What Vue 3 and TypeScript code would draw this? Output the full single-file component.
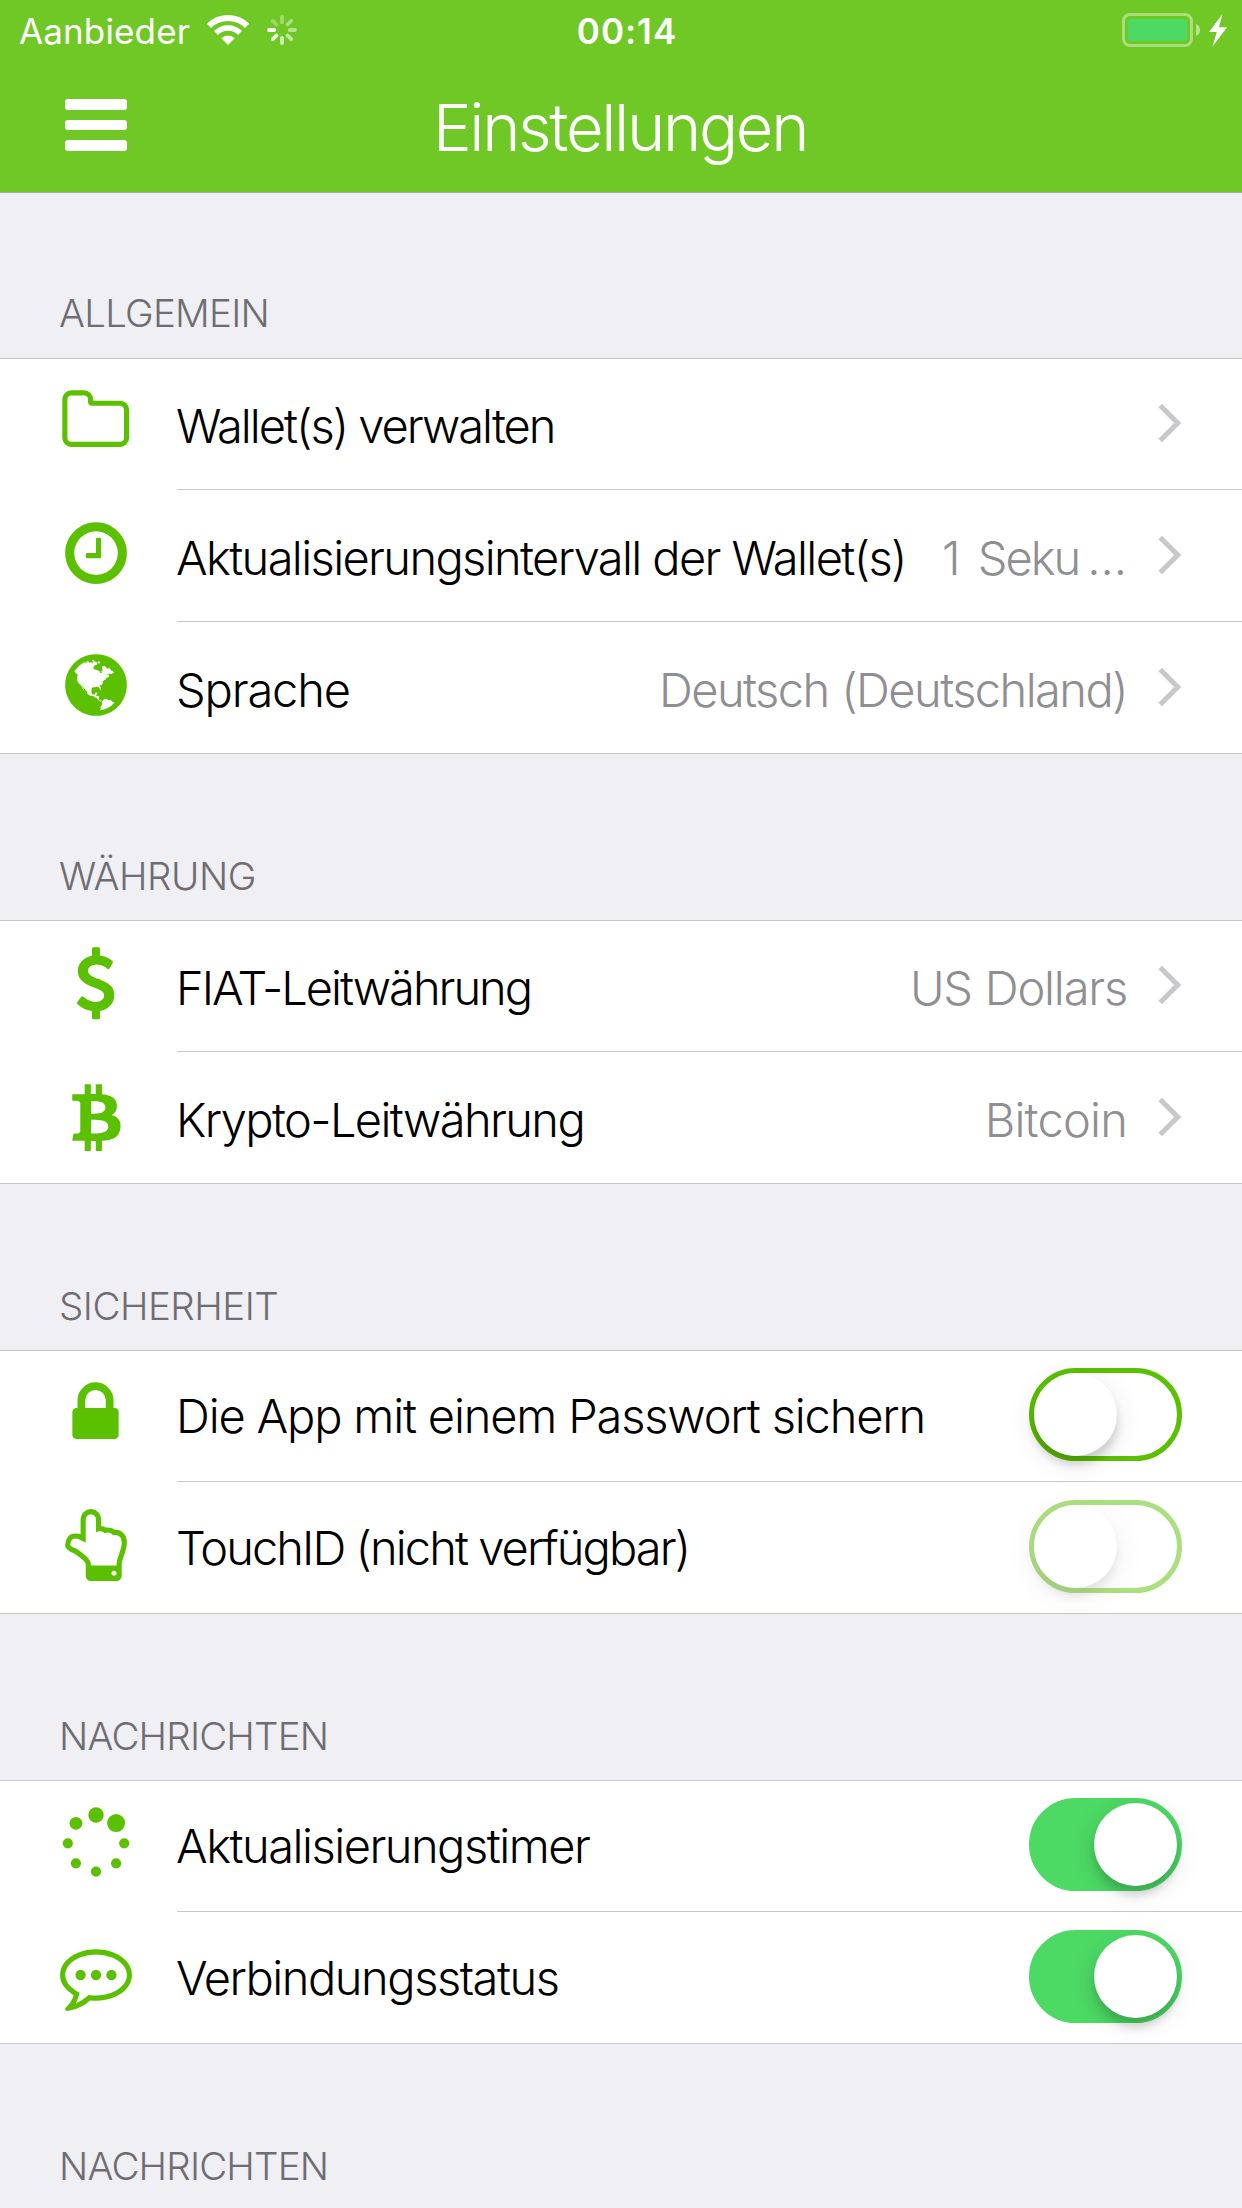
<script setup lang="ts">
type IconName = 'folder' | 'clock' | 'globe' | 'dollar' | 'bitcoin' | 'lock' | 'hand' | 'spinner' | 'comment'

interface Row {
  icon: IconName
  label: string
  tracking: number
  value?: string
  valueTracking?: number
  truncated?: boolean
  toggle?: 'on' | 'off' | 'disabled'
}

interface Section {
  title: string
  tracking: number
  rows: Row[]
}

const sections: Section[] = [
  {
    title: 'ALLGEMEIN',
    tracking: -0.75,
    rows: [
      { icon: 'folder', label: 'Wallet(s) verwalten', tracking: -2, value: '' },
      { icon: 'clock', label: 'Aktualisierungsintervall der Wallet(s)', tracking: -1.63, value: '1 Seku', valueTracking: -2, truncated: true },
      { icon: 'globe', label: 'Sprache', tracking: -1.15, value: 'Deutsch (Deutschland)', valueTracking: -1.56 },
    ],
  },
  {
    title: 'WÄHRUNG',
    tracking: -0.45,
    rows: [
      { icon: 'dollar', label: 'FIAT-Leitwährung', tracking: -2.02, value: 'US Dollars', valueTracking: -1.2 },
      { icon: 'bitcoin', label: 'Krypto-Leitwährung', tracking: -1.62, value: 'Bitcoin', valueTracking: -0.8 },
    ],
  },
  {
    title: 'SICHERHEIT',
    tracking: -0.5,
    rows: [
      { icon: 'lock', label: 'Die App mit einem Passwort sichern', tracking: -1.17, toggle: 'off' },
      { icon: 'hand', label: 'TouchID (nicht verfügbar)', tracking: -1.93, toggle: 'disabled' },
    ],
  },
  {
    title: 'NACHRICHTEN',
    tracking: -0.82,
    rows: [
      { icon: 'spinner', label: 'Aktualisierungstimer', tracking: -1.5, toggle: 'on' },
      { icon: 'comment', label: 'Verbindungsstatus', tracking: -1.46, toggle: 'on' },
    ],
  },
  { title: 'NACHRICHTEN', tracking: -0.82, rows: [] },
]

// Glyphs are drawn on a 1792-unit grid; x and y place the grid inside the row.
const glyphs: Partial<Record<IconName, { x: number; y: number; d: string }>> = {
  folder: {
    x: 19.7,
    y: 26.2,
    d: 'M1600 1312v-704q0-40-28-68t-68-28h-704q-40 0-68-28t-28-68v-64q0-40-28-68t-68-28h-320q-40 0-68 28t-28 68v960q0 40 28 68t68 28h1216q40 0 68-28t28-68zm128-704v704q0 92-66 158t-158 66h-1216q-92 0-158-66t-66-158v-960q0-92 66-158t158-66h320q92 0 158 66t66 158v32h672q92 0 158 66t66 158z',
  },
  clock: {
    x: 20,
    y: 27.1,
    d: 'M1024 544v448q0 14-9 23t-23 9h-320q-14 0-23-9t-9-23v-64q0-14 9-23t23-9h224v-352q0-14 9-23t23-9h64q14 0 23 9t9 23zm416 352q0-148-73-273t-198-198-273-73-273 73-198 198-73 273 73 273 198 198 273 73 273-73 198-198 73-273zm224 0q0 209-103 385.5t-279.5 279.5-385.5 103-385.5-103-279.5-279.5-103-385.5 103-385.5 279.5-279.5 385.5-103 385.5 103 279.5 279.5 103 385.5z',
  },
  globe: {
    x: 20,
    y: 27,
    d: 'M896 128q209 0 385.5 103t279.5 279.5 103 385.5-103 385.5-279.5 279.5-385.5 103-385.5-103-279.5-279.5-103-385.5 103-385.5 279.5-279.5 385.5-103zm274 521q-2 1-9.5 9.5t-13.5 9.5q2 0 4.5-5t5-11 3.5-7q6-7 22-15 14-6 52-12 34-8 51 11-2-2 9.5-13t14.5-12q3-2 15-4.5t15-7.5l2-22q-12 1-17.5-7t-6.5-21q0 2-6 8 0-7-4.500-8t-11.500 1-9 1q-10-3-15-7.500t-8-16.500-4-15q-2-5-9.500-10.500t-9.500-10.500q-1-2-2.500-5.500t-3-6.500-4-5.500-5.500-2.500-7 5-7.500 10-4.500 5q-3-2-6-1.500t-4.500 1-4.500 3-5 3.500q-3 2-8.500 3t-8.500 2q15-5-1-11-10-4-16-3 9-4 7.500-12t-8.500-14h5q-1-4-8.500-8.500t-17.500-8.500-13-6q-8-5-34-9.500t-33-.5q-5 6-4.500 10.500t4 14 3.500 12.500q1 6-5.500 13t-6.500 12q0 7 14 15.500t10 21.500q-3 8-16 16t-16 12q-5 8-1.500 18.500t10.500 16.500q2 2 1.500 4t-3.500 4.500-5.500 4-6.500 3.500l-3 2q-11 5-20.500-6t-13.500-26q-7-25-16-30-23-8-29 1-5-13-41-26-25-9-58-4 6-1 0-15-7-15-19-12 3-6 4-17.500t1-13.500q3-13 12-23 1-1 7-8.500t9.500-13.500.5-6q35 4 50-11 5-5 11.500-17t10.500-17q9-6 14-5.500t14.500 5.500 14.500 5q14 1 15.500-11t-7.500-20q12 1 3-17-4-7-8-9-12-4-27 5-8 4 2 8-1-1-9.500 10.500t-16.500 17.500-16-5q-1-1-5.500-13.500t-9.500-13.500q-8 0-16 15 3-8-11-15t-24-8q19-12-8-27-7-4-20.500-5t-19.500 4q-5 7-5.500 11.500t5 8 10.500 5.500 11.500 4 8.500 3q14 10 8 14-2 1-8.500 3.500t-11.500 4.500-6 4q-3 4 0 14t-2 14q-5-5-9-17.500t-7-16.500q7 9-25 6l-10-1q-4 0-16 2t-20.500 1-13.500-8q-4-8 0-20 1-4 4-2-4-3-11-9.500t-10-8.500q-46 15-94 41 6 1 12-1 5-2 13-6.500t10-5.500q34-14 42-7l5-5q14 16 20 25-7-4-30-1-20 6-22 12 7 12 5 18-4-3-11.500-10t-14.500-11-15-5q-16 0-22 1-146 80-235 222 7 7 12 8 4 1 5 9t2.500 11 11.500-3q9 8 3 19 1-1 44 27 19 17 21 21 3 11-10 18-1-2-9-9t-9-4q-3 5 .5 18.500t10.500 12.500q-7 0-9.500 16t-2.500 35.500-1 23.500l2 1q-3 12 5.500 34.500t21.500 19.500q-13 3 20 43 6 8 8 9 3 2 12 7.500t15 10 10 10.500q4 5 10 22.500t14 23.500q-2 6 9.500 20t10.500 23q-1 0-2.500 1t-2.500 1q3 7 15.500 14t15.500 13q1 3 2 10t3 11 8 2q2-20-24-62-15-25-17-29-3-5-5.500-15.500t-4.500-14.500q2 0 6 1.500t8.500 3.500 7.500 4 2 3q-3 7 2 17.500t12 18.500 17 19 12 13q6 6 14 19.500t0 13.500q9 0 20 10t17 20q5 8 8 26t5 24q2 7 8.500 13.500t12.500 9.500l16 8 13 7q5 2 18.500 10.500t21.500 11.500q10 4 16 4t14.500-2.500 13.500-3.500q15-2 29 15t21 21q36 19 55 11-2 1 .5 7.500t8 15.500 9 14.500 5.500 8.500q5 6 18 15t18 15q6-4 7-9-3 8 7 20t18 10q14-3 14-32-31 15-49-18 0-1-2.500-5.500t-4-8.500-2.500-8.500 0-7.500 5-3q9 0 10-3.500t-2-12.500-4-13q-1-8-11-20t-12-15q-5 9-16 8t-16-9q0 1-1.500 5.500t-1.500 6.500q-13 0-15-1 1-3 2.500-17.500t3.500-22.500q1-4 5.500-12t7.500-14.500 4-12.500-4.500-9.500-17.500-2.500q-19 1-26 20-1 3-3 10.500t-5 11.500-9 7q-7 3-24 2t-24-5q-13-8-22.500-29t-9.500-37q0-10 2.500-26.500t3-25-5.500-24.500q3-2 9-9.500t10-10.500q2-1 4.500-1.500t4.500 0 4-1.500 3-6q-1-1-4-3-3-3-4-3 7 3 28.500-1.500t27.500 1.500q15 11 22-2 0-1-2.500-9.500t-.5-13.500q5 27 29 9 3 3 15.500 5t17.500 5q3 2 7 5.500t5.500 4.500 5-.5 8.500-6.500q10 14 12 24 11 40 19 44 7 3 11 2t4.500-9.500 0-14-1.500-12.500l-1-8v-18l-1-8q-15-3-18.500-12t1.500-18.500 15-18.500q1-1 8-3.500t15.500-6.500 12.500-8q21-19 15-35 7 0 11-9-1 0-5-3t-7.500-5-4.500-2q9-5 2-16 5-3 7.500-11t7.500-10q9 12 21 2 8-8 1-16 5-7 20.500-10.500t18.500-9.500q7 2 8-2t1-12 3-12q4-5 15-9t13-5l17-11q3-4 0-4 18 2 31-11 10-11-6-20 3-6-3-9.500t-15-5.500q3-1 11.500-.5t10.500-1.500q15-10-7-16-17-5-43 12zm-163 877q206-36 351-189-3-3-12.500-4.500t-12.500-3.500q-18-7-24-8 1-7-2.500-13t-8-9-12.500-8-11-7q-2-2-7-6t-7-5.500-7.500-4.500-8.500-2-10 1l-3 1q-3 1-5.500 2.500t-5.500 3-4 3 0 2.500q-21-17-36-22-5-1-11-5.500t-10.500-7-10-1.500-11.500 7q-5 5-6 15t-2 13q-7-5 0-17.500t2-18.500q-3-6-10.500-4.500t-12 4.500-11.500 8.500-9 6.500-8.500 5.500-8.500 7.500q-3 4-6 12t-5 11q-2-4-11.500-6.500t-9.500-5.500q2 10 4 35t5 38q7 31-12 48-27 25-29 40-4 22 12 26 0 7-8 20.500t-7 21.500q0 6 2 16z',
  },
  dollar: {
    x: 19.6,
    y: 26.3,
    d: 'M1362 1185q0 153-99.5 263.5t-258.5 136.5v175q0 14-9 23t-23 9h-135q-13 0-22.5-9.5t-9.5-22.5v-175q-66-9-127.5-31t-101.500-44.500-74-48-46.500-37.500-17.500-18q-17-21-2-41l103-135q7-10 23-12 15-2 24 9l2 2q113 99 243 125 37 8 74 8 81 0 142.500-43t61.500-122q0-28-15-53t-33.500-42-58.500-37.500-66-32-80-32.500q-39-16-61.500-25t-61.500-26.500-62.500-31-56.500-35.500-53.500-42.500-43.500-49-35.500-58-21-66.500-8.500-78q0-138 98-242t255-134v-180q0-13 9.500-22.500t22.500-9.500h135q14 0 23 9t9 23v176q57 6 110.500 23t87 33.500 63.500 37.500 39 29 15 14q17 18 5 38l-81 146q-8 15-23 16-14 3-27-7-3-3-14.500-12t-39-26.500-58.500-32-74.500-26-85.500-11.500q-95 0-155 43t-60 111q0 26 8.500 48t29.500 41.500 39.500 33 56 31 60.500 27 70 27.500q53 20 81 31.500t76 35 75.500 42.500 62 50 53 63.500 31.500 76.500 13 94z',
  },
  bitcoin: {
    x: 30,
    y: 24,
    d: 'M1167 715q18 182-131 258 117 28 175 103t45 214q-7 71-32.5 125t-64.5 89-97 58.5-121.500 34.500-145.500 15v255h-154v-251q-80 0-122-1v252h-154v-255q-18 0-54-.5t-55-.5h-200l31-183h111q50 0 58-51v-402h16q-6-1-16-1v-287q-13-68-89-68h-111v-164l212 1q64 0 97-1v-252h154v247q82-2 122-2v-245h154v252q79 7 140 22.500t113 45 82.500 78 36.500 114.500zm-215 545q0-36-15-64t-37-46-57.500-30.500-65.500-18.500-74-9-69-3-64.500 1-47.500 1v338q8 0 37 .5t48 .5 53-1.500 58.500-4 57-8.500 55.500-14 47.500-21 39.500-30 24.500-40 9.500-51zm-71-476q0-33-12.500-58.500t-30.500-42-48-28-55-16.500-61.500-8-58-2.500-54 1-39.500.5v307q5 0 34.500.5t46.500 0 50-2 55-5.500 51.500-11 48.500-18.500 37-27 27-38.500 9-51z',
  },
  lock: {
    x: 19.5,
    y: 26.2,
    d: 'M640 768h512v-192q0-106-75-181t-181-75-181 75-75 181v192zm832 96v576q0 40-28 68t-68 28h-960q-40 0-68-28t-28-68v-576q0-40 28-68t68-28h32v-192q0-184 132-316t316-132 316 132 132 316v192h32q40 0 68 28t28 68z',
  },
  hand: {
    x: 20,
    y: 27,
    d: 'M1408 1600q0-26-19-45t-45-19-45 19-19 45 19 45 45 19 45-19 19-45zm128-764q0-189-167-189-26 0-56 5-16-30-52.5-47.5t-73.5-17.5-69 18q-50-53-119-53-25 0-55.5 10t-47.5 25v-331q0-52-38-90t-90-38q-51 0-89.5 39t-38.5 89v576q-20 0-48.5-15t-55-33-68-33-84.5-15q-67 0-97.5 44.5t-30.5 115.5q0 24 139 90 44 24 65 37 64 40 145 112 81 71 106 101 57 69 57 140v32h640v-32q0-72 32-167t64-193.5 32-179.5zm128-5q0 133-69 322-59 164-59 223v288q0 53-37.5 90.5t-90.5 37.5h-640q-53 0-90.5-37.5t-37.5-90.5v-288q0-10-4.5-21.5t-14-23.5-18-22.5-22.5-24-21.5-20.5-21.5-19-17-14q-74-65-129-100-21-13-62-33t-72-37-63-40.5-49.5-55-17.5-69.5q0-125 67-206.5t189-81.5q68 0 128 22v-374q0-104 77-180t179-76q105 0 181 75.5t76 180.5v169q62 4 119 37 21-3 43-3 101 0 178 60 139-1 219.5 85t80.5 227z',
  },
  comment: {
    x: 20,
    y: 27,
    d: 'M640 896q0 53-37.5 90.5t-90.5 37.5-90.5-37.5-37.5-90.5 37.5-90.5 90.5-37.5 90.5 37.5 37.5 90.5zm384 0q0 53-37.5 90.5t-90.5 37.5-90.5-37.5-37.5-90.5 37.5-90.5 90.5-37.5 90.5 37.5 37.5 90.5zm384 0q0 53-37.5 90.5t-90.5 37.5-90.5-37.5-37.5-90.5 37.5-90.5 90.5-37.5 90.5 37.5 37.5 90.5zm-512-512q-204 0-381.5 69.5t-282 187.5-104.5 255q0 112 71.5 213.5t201.5 175.5l87 50-27 96q-24 91-70 172 152-63 275-171l43-38 57 6q69 8 130 8 204 0 381.5-69.5t282-187.5 104.5-255-104.5-255-282-187.5-381.5-69.5zm896 512q0 174-120 321.5t-326 233-450 85.5q-70 0-145-8-198 175-460 242-49 14-114 22h-5q-15 0-27-10.5t-16-27.5v-1q-3-4-.5-12t2-10 4.500-9.500l6-9 7-8.500 8-9q7-8 31-34.500t34.500-38 31-39.500 32.500-51 27-59 26-76q-157-89-247.500-220t-90.500-281q0-174 120-321.500t326-233 450-85.500 450 85.500 326 233 120 321.500z',
  },
}

const spinnerDots = [
  [56, 34, 7.7],
  [76.1, 42.1, 9],
  [84.2, 62.3, 5.1],
  [76.1, 82.3, 5.1],
  [56, 90.6, 5.1],
  [35.9, 82.3, 5.1],
  [27.8, 62.3, 5.1],
  [35.9, 42.3, 6.4],
]

const spokes = [0.35, 0.4, 0.48, 0.58, 0.7, 0.88, 1, 0.3]
</script>

<template>
  <div class="screen">
    <header class="header">
      <div class="status">
        <div class="status-side">
          <span class="carrier">Aanbieder</span>
          <svg class="wifi" viewBox="0 0 42 30" width="42" height="30" fill="none" stroke="#fff">
            <path d="M1.9 10.9A27 27 0 0 1 40.1 10.9" stroke-width="6" />
            <path d="M9 18A17 17 0 0 1 33 18" stroke-width="5.6" />
            <path d="M21 30L14.4 23.3A9.4 9.4 0 0 1 27.6 23.3Z" fill="#fff" stroke="none" />
          </svg>
          <svg class="activity" viewBox="-15 -15 30 30" width="30" height="30">
            <line
              v-for="(o, i) in spokes"
              :key="i"
              x1="0"
              y1="-7.8"
              x2="0"
              y2="-13"
              stroke="#fff"
              stroke-width="3.8"
              stroke-linecap="round"
              :stroke-opacity="o"
              :transform="`rotate(${i * 45})`"
            />
          </svg>
        </div>
        <span class="time">00:14</span>
        <div class="status-side status-end">
          <svg viewBox="0 0 105 34" width="105" height="34">
            <rect x="1.5" y="1.5" width="68" height="31" rx="6.5" fill="none" stroke="#fff" stroke-opacity=".4" stroke-width="3" />
            <rect x="5.7" y="6" width="59.6" height="22" rx="4" fill="#4cd964" />
            <path d="M74 11q4 1.5 4 6t-4 6z" fill="#fff" fill-opacity=".5" />
            <path d="M100.5 1L87 19h7.8l-4.4 14.7L105 14.3h-8z" fill="#fff" />
          </svg>
        </div>
      </div>
      <div class="navbar">
        <button class="menu" type="button" aria-label="Menü"><i /><i /><i /></button>
        <h1 class="title">Einstellungen</h1>
      </div>
    </header>

    <section v-for="(section, s) in sections" :key="s" class="section">
      <h2 class="section-title" :style="{ letterSpacing: section.tracking + 'px' }">{{ section.title }}</h2>
      <div class="list">
        <div v-for="row in section.rows" :key="row.label" class="row">
          <svg class="icon" viewBox="0 0 120 130" width="120" height="130">
            <g v-if="row.icon === 'spinner'">
              <circle v-for="(dot, i) in spinnerDots" :key="i" :cx="dot[0]" :cy="dot[1]" :r="dot[2]" />
            </g>
            <path
              v-else
              :d="glyphs[row.icon]!.d"
              :transform="`translate(${glyphs[row.icon]!.x} ${glyphs[row.icon]!.y}) scale(.040179)`"
            />
          </svg>
          <div class="body">
            <span class="label" :class="{ low: !row.toggle }" :style="{ letterSpacing: row.tracking + 'px' }">{{ row.label }}</span>
            <template v-if="!row.toggle">
              <span class="value" :class="{ truncated: row.truncated }" :style="{ letterSpacing: (row.valueTracking ?? 0) + 'px' }">{{ row.value }}<span v-if="row.truncated" class="dots">…</span></span>
              <svg class="chevron" viewBox="0 0 24 40" width="24" height="40">
                <path d="M2.2 2.5L19.7 20L2.2 37.5" fill="none" stroke="#c7c7cc" stroke-width="5" />
              </svg>
            </template>
            <span v-else class="toggle" :class="row.toggle"><span class="knob" /></span>
          </div>
        </div>
      </div>
    </section>
  </div>
</template>

<style>
body {
  margin: 0;
  background: #efeff4;
}
</style>

<style scoped>
.screen {
  width: 1242px;
  height: 2208px;
  overflow: hidden;
  background: #efeff4;
  font-family: Inter, 'Liberation Sans', sans-serif;
  font-weight: 300;
}
.header {
  box-sizing: border-box;
  height: 193px;
  background: #70c826;
  border-bottom: 1px solid #a7a7ab;
  color: #fff;
}
.status {
  display: flex;
  align-items: center;
  height: 60px;
}
.status-side {
  flex: 1 1 0;
  display: flex;
  align-items: center;
  padding-left: 19px;
}
.status-end {
  justify-content: flex-end;
  padding: 0 15px 0 0;
}
.carrier {
  width: 188px;
  padding-top: 2px;
  font-size: 35px;
  font-weight: 400;
  line-height: 58px;
  letter-spacing: 0.13px;
}
.activity {
  margin-left: 18px;
}
.time {
  padding: 2px 0 0 8px;
  font-size: 35px;
  font-weight: 600;
  line-height: 58px;
  letter-spacing: 0.97px;
}
.navbar {
  display: grid;
  grid-template-columns: 192px 1fr 192px;
  align-items: center;
  height: 132px;
}
.menu {
  display: flex;
  flex-direction: column;
  gap: 10px;
  width: 62px;
  margin: -2px 0 0 65px;
  padding: 0;
  border: 0;
  background: none;
}
.menu i {
  height: 10.7px;
  border-radius: 3px;
  background: #fff;
}
.title {
  margin: 4px 0 0 -2px;
  font-size: 65px;
  font-weight: 300;
  line-height: 80px;
  letter-spacing: -2.3px;
  text-align: center;
}
.section-title {
  box-sizing: border-box;
  display: flex;
  align-items: flex-end;
  height: 166px;
  margin: 0;
  padding: 0 0 24px 59px;
  color: #6d6d72;
  font-size: 38.5px;
  font-weight: 300;
  line-height: 40px;
}
.section:nth-of-type(1) .section-title {
  height: 165px;
  padding-bottom: 25px;
}
.list {
  background: #fff;
  border-top: 1px solid #c8c7cc;
}
.row {
  box-sizing: border-box;
  display: flex;
  height: 132px;
  padding-left: 40px;
}
.row:first-child {
  height: 131px;
}
.icon {
  flex: none;
  fill: #5bc000;
}
.body {
  box-sizing: border-box;
  flex: 1;
  display: flex;
  align-items: center;
  margin-left: 17px;
  padding-right: 60px;
  border-bottom: 1px solid #c8c7cc;
}
.row:first-child .body {
  padding-bottom: 1px;
}
.row:last-child {
  border-bottom: 1px solid #c8c7cc;
}
.row:last-child .body {
  border-bottom: 0;
}
.label {
  flex: none;
  margin-left: -1px;
  color: #000;
  font-size: 47px;
  line-height: 60px;
  white-space: nowrap;
}
.low,
.value {
  padding-top: 5px;
}
.value {
  flex: 1;
  color: #8e8e93;
  font-size: 47px;
  line-height: 60px;
  text-align: right;
  white-space: nowrap;
  word-spacing: 1px;
}
.value.truncated {
  word-spacing: 8px;
}
.dots {
  margin: 0 2px 0 8px;
}
.chevron {
  flex: none;
  margin: -2px 0 0 31px;
}
.toggle {
  box-sizing: border-box;
  display: flex;
  width: 153px;
  height: 93px;
  margin: -2px 0 0 auto;
  border: 5px solid #5bc000;
  border-radius: 47px;
}
.toggle.disabled {
  opacity: 0.5;
}
.toggle.on {
  justify-content: flex-end;
  background: #4cd964;
  border-color: #4cd964;
}
.knob {
  width: 83px;
  height: 83px;
  border-radius: 50%;
  background: #fff;
  box-shadow: 0 9px 10px rgba(0, 0, 0, 0.16), 0 6px 30px rgba(0, 0, 0, 0.09);
}
</style>
